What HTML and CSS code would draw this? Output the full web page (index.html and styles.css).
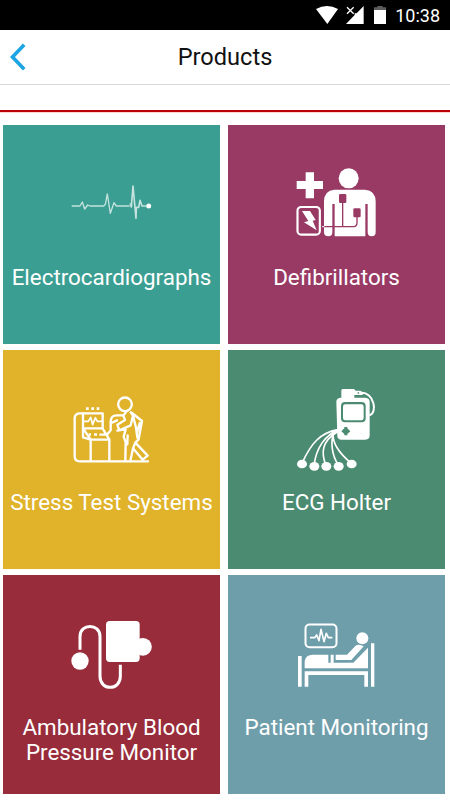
FILE: index.html
```html
<!DOCTYPE html>
<html lang="en">
<head>
    <meta charset="UTF-8">
    <meta name="viewport" content="width=device-width, initial-scale=1.0">
    <title>Products</title>
    <link rel="stylesheet" href="styles.css">
</head>
<body>
    <div class="status-bar">
        <svg class="wifi" width="22" height="18" viewBox="0 0 66 54"><path fill="#fff" d="M0 9Q33-9 66 9L34 54Z"/></svg>
        <svg class="signal" width="18" height="18" viewBox="0 0 54 54">
            <path fill="#fff" d="M53 0V54H0L26 27V22H32Z"/>
            <path stroke="#fff" stroke-width="4" d="M3 4L23 23M23 4L3 23"/>
        </svg>
        <svg class="battery" width="12" height="18" viewBox="0 0 36 54">
            <path fill="#5c5c5c" d="M10 0H26V4H36V12H0V4H10Z"/>
            <path fill="#fff" d="M0 12H36V54H0Z"/>
        </svg>
        <span class="time">10:38</span>
    </div>

    <header class="header">
        <a href="#" class="back" aria-label="Back">
            <svg width="16" height="28" viewBox="0 0 16 28"><path fill="none" stroke="#1ca5e2" stroke-width="3.6" d="M14.2 1.8L2.5 14L14.2 26.200"/></svg>
        </a>
        <h1 class="title">Products</h1>
    </header>
    <div class="red-line"></div>

    <main class="products">
        <a class="tile ecg">
            <svg class="icon" viewBox="12 -30 285 270">
                <g fill="none" stroke="#fff" stroke-linejoin="round">
                    <path stroke-width="4" opacity=".7" d="M35 108H60L67 96L74 117L83 105L90 108H131L136 103L142 72L151 130L162 98L169 108H209"/>
                    <path stroke-width="5" opacity=".7" d="M211 100L214 111L219 48L228 145L229 112H236L240 91L246 108H258"/>
                </g>
                <circle cx="266" cy="108" r="7.5" fill="#fff"/>
            </svg>
            <span class="label">Electrocardiographs</span>
        </a>

        <a class="tile defib">
            <svg class="icon" viewBox="12 0 285 270">
                <path fill="#fff" d="M62 37H87V63H114V87H87V115H62V87H35V63H62Z"/>
                <circle cx="191" cy="55" r="30" fill="#fff"/>
                <path fill="#fff" d="M148 89H240Q272 92 272 124V216Q272 229 260 229Q248 229 248 216V132H241V229H149V132H142V216Q142 229 130 229Q117 229 117 216V124Q117 92 148 89Z"/>
                <path fill="none" stroke="#993a65" stroke-width="4" d="M108 200H206Q216 199 216 188V166M173 128V200"/>
                <path fill="none" stroke="#fff" stroke-width="3" d="M106 200H118"/>
                <rect x="162" y="102" width="22" height="27" rx="4" fill="#993a65"/>
                <rect x="205" y="145" width="22" height="27" rx="4" fill="#993a65"/>
                <rect x="31" y="135" width="80" height="94" rx="15" fill="#993a65"/>
                <rect x="37.500" y="141" width="67" height="83" rx="11" fill="none" stroke="#fff" stroke-width="6.500"/>
                <path fill="#fff" d="M51 153H75L92 180L83 182L95 211L57 187L70 183Z"/>
            </svg>
            <span class="label">Defibrillators</span>
        </a>

        <a class="tile stress">
            <svg class="icon" viewBox="-3 0 285 270">
                <g fill="none" stroke="#fff" stroke-width="7" stroke-linejoin="round" stroke-linecap="round">
                    <path d="M79 229H42Q29 228 29 214V99Q30 85 45 85H113V130H54L77 164V229H249"/>
                    <path d="M54 86V157L77 164H133V228M113 131L133 163M106 149H126L137 136V107Q140 91 154 91H174M139 114L156 106"/>
                    <path stroke-width="5" d="M56 109H70L77 97L83 119L91 98L97 109H111"/>
                    <circle cx="180" cy="58" r="20.500"/>
                    <path d="M184 80L175 92L180 105L157 119L163 136L197 121L204 92L197 82M157 137L182 133L176 155L182 172L181 228M201 84L231 108L221 163L211 173L248 212L233 224L204 190L196 228M205 95L213 128L217 158M188 151L187 178M211 173L204 190M224 114L216 143"/>
                </g>
                <path fill="#fff" d="M63 67h8v8h-8zM79 67h8v8h-8zM95 67h8v8h-8zM71 145h7v7h-7zM87 145h9v7h-9z"/>
            </svg>
            <span class="label">Stress Test Systems</span>
        </a>

        <a class="tile holter">
            <svg class="icon" viewBox="-3 15 285 270">
                <g fill="none" stroke="#fff" stroke-width="5">
                    <path d="M143 149C90 159 63 190 36 250M145 151C105 164 78 205 72 257M143 155C94 184 93 218 108 257M133 158C120 183 125 225 146 257M129 159C126 196 155 226 184 250"/>
                    <path stroke-width="6" d="M214 38C252 38 264 98 238 106"/>
                </g>
                <path fill="#fff" d="M158 27H192L197 32H211Q218 34 218 45H193V53H226Q239 54 239 66V166Q239 179 226 179H153Q141 178 142 166L139 65Q139 54 151 53H154V32Q154 27 158 27Z"/>
                <rect x="153" y="66" width="74" height="61" rx="12" fill="#4b8b71"/>
                <rect x="159" y="73" width="62" height="48" rx="7" fill="#fff"/>
                <path fill="#4b8b71" d="M163 141H172V145L181 154L172 162V166H163V162L154 154L163 145ZM203 37h4v4h-4z"/>
                <g fill="#fff">
                    <ellipse cx="36" cy="252" rx="15" ry="13"/>
                    <ellipse cx="73" cy="259" rx="15" ry="13"/>
                    <ellipse cx="109" cy="259" rx="15" ry="13"/>
                    <ellipse cx="146" cy="259" rx="15" ry="13"/>
                    <ellipse cx="185" cy="252" rx="15" ry="13"/>
                </g>
            </svg>
            <span class="label">ECG Holter</span>
        </a>

        <a class="tile abpm">
            <svg class="icon" viewBox="-3 0 285 270">
                <circle cx="45" cy="153" r="26" fill="#fff"/>
                <path fill="none" stroke="#fff" stroke-width="9" d="M45 119V80C45 39 105 39 105 80V199C105 243 166 243 166 199V164"/>
                <rect x="123" y="33" width="101" height="123" rx="11" fill="#fff"/>
                <path fill="#fff" d="M219 91Q222 84 234 84A26 26 0 0 1 234 137Q224 137 219 131Z"/>
            </svg>
            <span class="label">Ambulatory Blood<br>Pressure Monitor</span>
        </a>

        <a class="tile patient">
            <svg class="icon" viewBox="-3 -15 285 270">
                <rect x="46.500" y="28.500" width="93" height="68" rx="12" fill="none" stroke="#fff" stroke-width="6"/>
                <path fill="none" stroke="#fff" stroke-width="5" stroke-linejoin="round" d="M60 68H74L80 60L87 77L93 43L102 80L109 55L115 68H127"/>
                <circle cx="217" cy="70" r="18" fill="#fff"/>
                <path fill="#fff" d="M24 123H35V215H24ZM243 85H253V215H243ZM44 169H234V215H223V180H55V215H44ZM44 160V138Q48 119 68 119H115V143H122V119H131V143H190L234 98V160ZM137 119H171L196 93Q202 88 211 90L221 94L184 135H137Z"/>
            </svg>
            <span class="label">Patient Monitoring</span>
        </a>
    </main>
</body>
</html>
```
FILE: styles.css
```css
*{
    box-sizing: border-box;
}
body{
    margin: 0;
    height: 800px;
    overflow: hidden;
    background-color: #fff;
    font-family: Roboto, sans-serif;
}
.status-bar{
    display: flex;
    align-items: center;
    justify-content: flex-end;
    height: 30px;
    padding-right: 10px;
    background-color: #000;
    color: #fff;
}
.wifi{
    margin-right: 8px;
}
.signal{
    margin-right: 10px;
}
.battery{
    margin-right: 9px;
}
.time{
    width: 45px;
    font-size: 18px;
    line-height: 30px;
    padding-top: 2px;
    text-align: right;
}
.header{
    display: grid;
    grid-template-columns: 60px 1fr 60px;
    align-items: center;
    height: 55px;
    border-bottom: 1px solid #d7d7d7;
}
.back{
    display: flex;
    padding-left: 10px;
}
.title{
    margin: 0;
    font-size: 23.6px;
    font-weight: 400;
    line-height: 54px;
    text-align: center;
    color: #111;
}
.red-line{
    height: 3px;
    margin-top: 25px;
    border-top: 2px solid #b80006;
    border-bottom: 1px solid #ffd3d0;
}
.products{
    display: grid;
    grid-template-columns: 217px 217px;
    grid-auto-rows: 219px;
    gap: 6px 8px;
    padding: 12px 0 0 3px;
}
.tile{
    display: flex;
    flex-direction: column;
    align-items: center;
    padding-top: 35px;
    color: #fff;
}
.icon{
    width: 95px;
    height: 90px;
}
.label{
    margin-top: 15px;
    font-size: 22.4px;
    line-height: 25px;
    text-align: center;
    white-space: nowrap;
}
.ecg{
    background-color: #3a9e92;
}
.defib{
    background-color: #993a65;
}
.stress{
    background-color: #e0b32b;
}
.holter{
    background-color: #4b8b71;
}
.abpm{
    background-color: #982c3a;
}
.patient{
    background-color: #6f9eab;
}
```
